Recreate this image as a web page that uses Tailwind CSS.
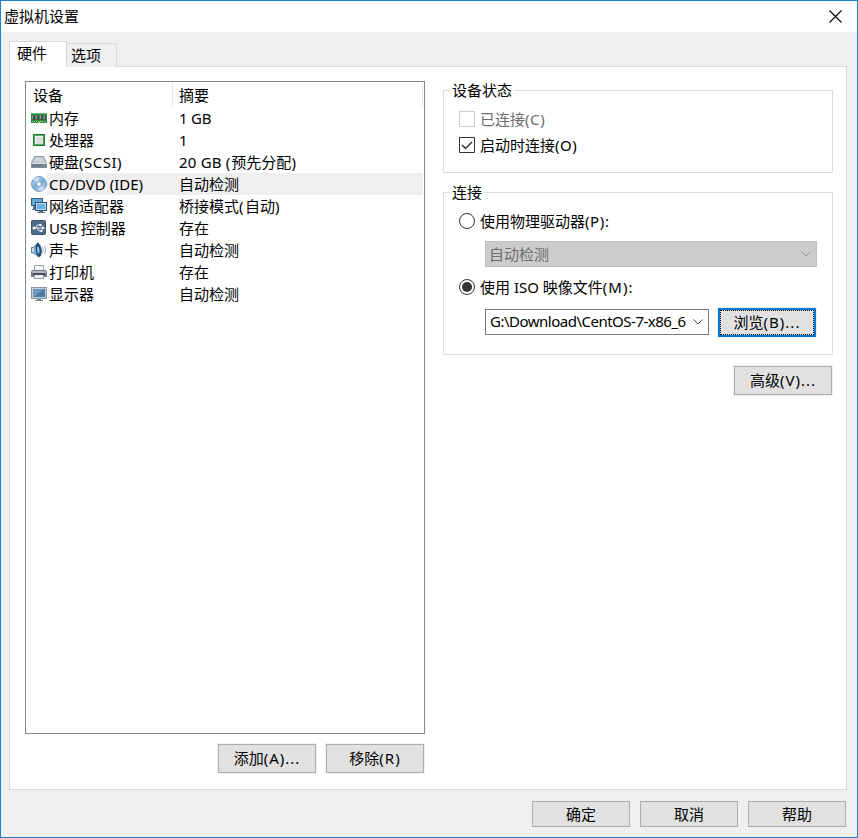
<!DOCTYPE html>
<html lang="zh-CN">
<head>
<meta charset="utf-8">
<title>虚拟机设置</title>
<script src="https://cdn.jsdelivr.net/npm/@tailwindcss/browser@4"></script>
</head>
<body class="font-['Noto_Sans','Noto_Sans_CJK_SC',sans-serif] text-[15px] leading-[22px] font-normal text-black">
<div class="flex h-[838px] w-[858px] flex-col overflow-hidden border border-[#1a80d4] bg-[#efefef] whitespace-nowrap">
  <header class="flex h-[31px] shrink-0 items-center justify-between bg-white pr-[15px] pl-[3px]">
    <h1 class="pb-[2px]">虚拟机设置</h1>
    <svg class="h-[13px] w-[13px]" viewBox="0 0 13 13" fill="none" stroke="#000" stroke-width="1.1"><path d="M.5.5l12 12M12.5.5l-12 12"/></svg>
  </header>

  <nav class="z-10 mt-[9px] ml-2 flex h-[26px] shrink-0 items-end">
    <div class="-mb-px h-[26px] w-[58px] self-start border border-b-0 border-[#d9d9d9] bg-white pl-[7px] leading-[22px]">硬件</div>
    <div class="-ml-px h-[24px] w-[51px] border border-b-0 border-[#d9d9d9] bg-[#f0f0f0] pl-[4px] leading-[22px]">选项</div>
  </nav>

  <main class="-mt-px ml-2 flex h-[724px] w-[838px] shrink-0 border border-[#d9d9d9] bg-white pt-[14px] pl-[15px]">
    <section class="flex w-[400px] flex-col">
      <div class="h-[653px] border border-[#828790] bg-white">
        <div class="flex h-[25px] leading-[24px]">
          <div class="mt-px w-[147px] border-r border-[#e5e5e5] pl-[7px]">设备</div>
          <div class="mt-px w-[250px] border-r border-[#e5e5e5] pl-[6px]">摘要</div>
        </div>
        <div class="flex h-[22px] w-[397px] pl-[5px]">
          <svg class="mt-[3px] size-4" viewBox="0 0 16 16"><path d="M0 3h16v10H9v-1H8v1H0z" fill="#2c8b43"/><path d="M0 3h16v1H0z" fill="#68ba76"/><path d="M1 5h3v5H1zM5 5h3v5H5zM9 5h3v5H9zM13 5h2v5h-2z" fill="#48524c"/><path d="M1 5h1v4H1zM5 5h1v4H5zM9 5h1v4H9zM13 5h1v4h-1z" fill="#8f9993"/><path d="M1 11.5h14" stroke="#c3cf78" stroke-dasharray="1 1"/></svg>
          <span class="w-[132px] pl-[2px]">内存</span><span class="tracking-[-.2px]">1 GB</span>
        </div>
        <div class="flex h-[22px] w-[397px] pl-[5px]">
          <svg class="mt-[3px] size-4" viewBox="0 0 16 16"><path d="M2 2h12v12H2z" fill="#207d38"/><path d="M3 3h10v10H3z" fill="#4ba860"/><path d="M4 4h8v8H4z" fill="#f5f5f5"/><path d="M5 5h7v7H5z" fill="#dcdedb"/></svg>
          <span class="w-[132px] pl-[2px]">处理器</span><span>1</span>
        </div>
        <div class="flex h-[22px] w-[397px] pl-[5px]">
          <svg class="mt-[3px] size-4" viewBox="0 0 16 16"><path d="M3.500 2h9L16 9v5H0V9z" fill="#838c97"/><path d="M3.800 2.700h8.400L15 9H1z" fill="#bfc6cf"/><path d="M5 3.500h6l1.500 4h-9z" fill="#d3d9e0"/><path d="M.5 9h15v1H.5z" fill="#dfe3e8"/><path d="M1 10h14v3H1z" fill="#707c8b"/><path d="M12 11h2v1h-2z" fill="#77d35b"/></svg>
          <span class="w-[132px] pl-[2px]">硬盘<span class="tracking-[.5px]">(SCSI)</span></span><span><span class="tracking-[.2px]">20 GB </span><span class="tracking-[1px]">(</span>预先分配<span class="tracking-[1px]">)</span></span>
        </div>
        <div class="flex h-[22px] w-[397px] pl-[5px]">
          <svg class="mt-[3px] size-4" viewBox="0 0 16 16"><circle cx="8" cy="8" r="7.500" fill="#98bfdf" stroke="#6f9bc3"/><path d="M8 8L2 3.500A7.500 7.500 0 018 .8zM8 8l6 4.500A7.500 7.500 0 018 15.200z" fill="#c7ddef"/><path d="M8 8L1 9a7 7 0 003 5zM8 8l7-1a7 7 0 00-3-5z" fill="#82afd5"/><circle cx="8" cy="8" r="2.700" fill="#c4d9ea" stroke="#6f9bc3" stroke-width=".7"/><circle cx="8" cy="8" r="1.200" fill="#fff"/></svg>
          <span class="w-[132px] bg-[#efefef] pl-[2px]">CD/DVD (IDE)</span><span class="flex-1 bg-[#efefef]">自动检测</span>
        </div>
        <div class="flex h-[22px] w-[397px] pl-[5px]">
          <svg class="mt-[3px] size-4" viewBox="0 0 16 16"><path d="M0 0h12v8H0z" fill="#315f8b"/><path d="M1 1h10v6H1z" fill="#6ba9d6"/><path d="M2 8h2v3h2v1H1v-1h1z" fill="#5d7690"/><path d="M4 4h12v9H4z" fill="#244e79"/><path d="M5 5h10v7H5z" fill="#b9def5"/><path d="M6 6h8v5H6z" fill="#64aee0"/><path d="M8 13h4v1h2v1H6v-1h2z" fill="#5d7690"/></svg>
          <span class="w-[132px] pl-[2px]">网络适配器</span><span>桥接模式<span class="tracking-[1.5px]">(</span>自动<span>)</span></span>
        </div>
        <div class="flex h-[22px] w-[397px] pl-[5px]">
          <svg class="mt-[3px] size-4" viewBox="0 0 16 16"><rect x=".5" y=".5" width="14" height="14" rx="1" fill="#4e6b87" stroke="#3d5873"/><path d="M2.500 8H12M4.500 8l2-3H9M6 8l2 3h2" stroke="#e8eef3" fill="none"/><circle cx="3" cy="8" r="1.500" fill="#fff"/><path d="M11 6.200l3 1.800-3 1.800zM8.500 4h2v2h-2zM9.500 10h2v2h-2z" fill="#fff"/></svg>
          <span class="w-[132px] pl-[2px]"><span class="tracking-[-.25px]">USB </span>控制器</span><span>存在</span>
        </div>
        <div class="flex h-[22px] w-[397px] pl-[5px]">
          <svg class="mt-[3px] size-4" viewBox="0 0 16 16"><path d="M.5 5.500h2L6.500.8c4.500 2 5 12 1.500 14.500L2.500 11H.5z" fill="#7ba7cd" stroke="#41709c" stroke-width=".8"/><path d="M1 6h2v4H1z" fill="#c8ddec"/><ellipse cx="7.600" cy="8" rx="2.700" ry="6.800" transform="rotate(-8 7.600 8)" fill="#234d77"/><ellipse cx="7.300" cy="8" rx="1.200" ry="3.500" transform="rotate(-8 7.300 8)" fill="#8dbce2"/><path d="M11.500 5q1.500 3 0 6M13.500 4q2.500 4 0 8" fill="none" stroke="#9bb8d1"/></svg>
          <span class="w-[132px] pl-[2px]">声卡</span><span>自动检测</span>
        </div>
        <div class="flex h-[22px] w-[397px] pl-[5px]">
          <svg class="mt-[3px] size-4" viewBox="0 0 16 16"><path d="M3 1h10v6H3z" fill="#a0a5b2"/><path d="M4 2h8v5H4z" fill="#f5f6f8"/><path d="M1 6h14l1 2v5H0V8z" fill="#767c8c"/><path d="M1 7h14v2H1z" fill="#b4b8c3"/><path d="M2 9h12v2H2z" fill="#4c5160"/><path d="M3 11h10v4H3z" fill="#9298a7"/><path d="M4 11h8v3H4z" fill="#f4f4f6"/></svg>
          <span class="w-[132px] pl-[2px]">打印机</span><span>存在</span>
        </div>
        <div class="flex h-[22px] w-[397px] pl-[5px]">
          <svg class="mt-[3px] size-4" viewBox="0 0 16 16"><path d="M0 1h16v12H0z" fill="#8494a3"/><path d="M1 2h14v10H1z" fill="#c5d0da"/><path d="M2 3h12v8H2z" fill="#4c78a5"/><path d="M2 3h11L3 11H2z" fill="#7096bc"/><path d="M6 13h4v1h2v1H4v-1h2z" fill="#7c8a98"/></svg>
          <span class="w-[132px] pl-[2px]">显示器</span><span>自动检测</span>
        </div>
      </div>
      <div class="mt-[10px] flex justify-end gap-[10px] pr-px">
        <button class="h-[29px] w-[98px] border border-[#adadad] bg-[#e1e1e1] pb-[2px] outline outline-[#f0f0f0]">添加<span class="tracking-[1px]">(A)...</span></button>
        <button class="h-[29px] w-[98px] border border-[#adadad] bg-[#e1e1e1] pb-[2px] outline outline-[#f0f0f0]">移除<span class="tracking-[1px]">(R)</span></button>
      </div>
    </section>

    <section class="ml-[18px] flex w-[390px] flex-col pt-px">
      <fieldset class="h-[91px] border border-[#dcdcdc] pl-[15px]">
        <legend class="-ml-[9px] h-[17px] w-[64px] pl-[2px] leading-[17px]">设备状态</legend>
        <label class="mt-[7px] flex h-[26px] items-center text-[#6d6d6d]"><span class="mr-[5px] size-4 border border-[#ccc] bg-white"></span>已连接<span class="tracking-[.6px]">(C)</span></label>
        <label class="flex h-[26px] items-center"><svg class="mr-[5px] size-4" viewBox="0 0 16 16" fill="none" stroke="#333"><path d="M.5.5h15v15H.5z"/><path d="M3 8l3.500 3.500L13 5" stroke-width="1.500"/></svg>启动时连接<span class="tracking-[.5px]">(O)</span></label>
      </fieldset>
      <fieldset class="mt-[11px] h-[171px] border border-[#dcdcdc] pl-[15px]">
        <legend class="-ml-[9px] h-[17px] w-[34px] pl-[2px] leading-[17px]">连接</legend>
        <label class="mt-[7px] flex h-[26px] items-center"><svg class="mr-[5px] size-4" viewBox="0 0 16 16"><circle cx="8" cy="8" r="7.500" fill="#fff" stroke="#333"/></svg>使用物理驱动器<span class="tracking-[.6px]">(P):</span></label>
        <div class="mt-[7px] ml-[26px] flex h-[26px] w-[332px] items-center justify-between border border-[#bfbfbf] bg-[#ccc] pr-[5px] pl-[3px] text-[#6d6d6d]"><span class="pb-px">自动检测</span><svg class="h-[6px] w-[10px]" viewBox="0 0 10 6" fill="none" stroke="#999"><path d="M.5.5L5 5 9.500.5"/></svg></div>
        <label class="mt-[7px] flex h-[26px] items-center"><svg class="mr-[5px] size-4" viewBox="0 0 16 16"><circle cx="8" cy="8" r="7.500" fill="#fff" stroke="#333"/><circle cx="8" cy="8" r="5" fill="#333"/></svg>使用 ISO 映像文件<span class="tracking-[1px]">(M):</span></label>
        <div class="mt-[8px] ml-[26px] flex items-start">
          <div class="mt-px flex h-[26px] w-[224px] items-center justify-between border border-[#7a7a7a] bg-white pr-[5px] pl-1"><span class="w-[201px] pb-[2px] tracking-[-.5px]">G:\Download\CentOS-7-x86_6</span><svg class="h-[6px] w-[10px] shrink-0" viewBox="0 0 10 6" fill="none" stroke="#444"><path d="M.5.5L5 5 9.500.5"/></svg></div>
          <button class="ml-[9px] h-[29px] w-[98px] border-2 border-[#0078d7] bg-[#e1e1e1] outline outline-[#f0f0f0]"><span class="flex h-full items-center justify-center border border-dotted border-black pb-[2px]">浏览<span class="tracking-[1px]">(B)...</span></span></button>
        </div>
      </fieldset>
      <button class="mt-[11px] mr-px h-[29px] w-[98px] self-end border border-[#adadad] bg-[#e1e1e1] pb-[2px] outline outline-[#f0f0f0]">高级<span class="tracking-[1px]">(V)...</span></button>
    </section>
  </main>

  <footer class="mt-[11px] mr-[11px] flex justify-end gap-[10px]">
    <button class="h-[26px] w-[98px] border border-[#adadad] bg-[#e1e1e1]">确定</button>
    <button class="h-[26px] w-[98px] border border-[#adadad] bg-[#e1e1e1]">取消</button>
    <button class="h-[26px] w-[98px] border border-[#adadad] bg-[#e1e1e1]">帮助</button>
  </footer>
</div>
</body>
</html>
